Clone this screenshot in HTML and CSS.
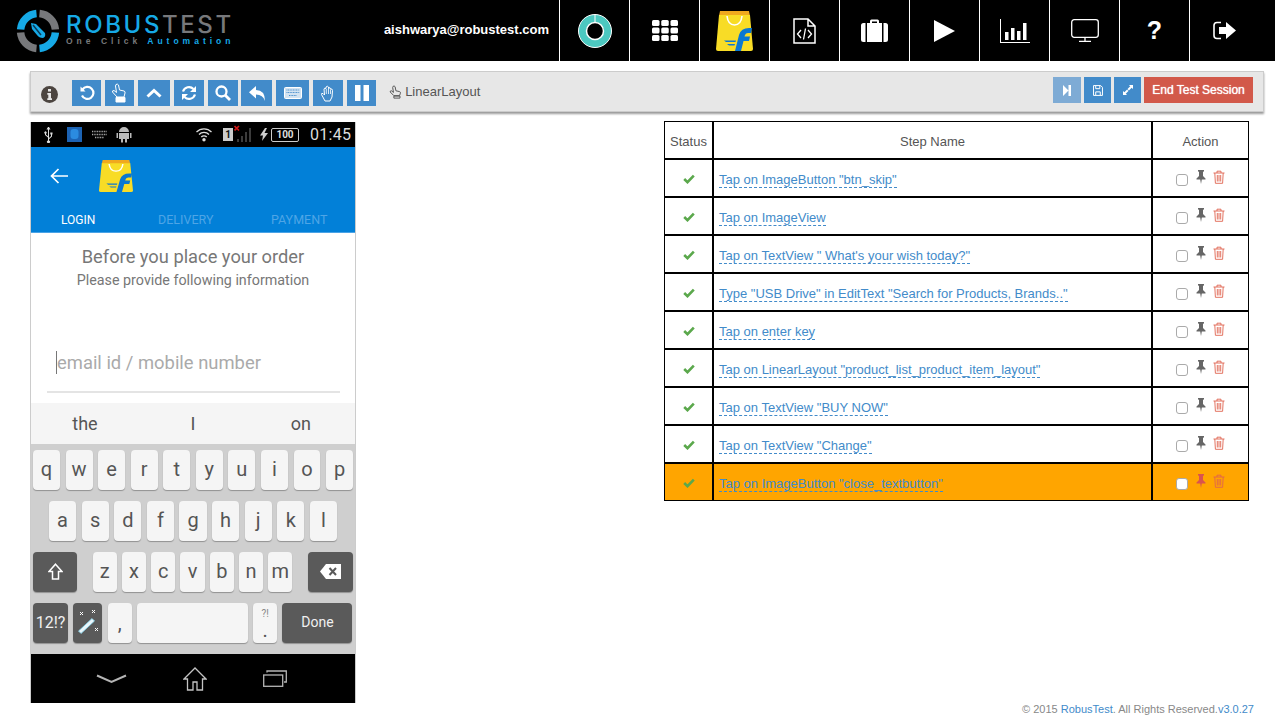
FILE: index.html
```html
<!DOCTYPE html>
<html lang="en">

<head>
    <meta charset="UTF-8">
    <meta name="viewport" content="width=device-width, initial-scale=1.0">
    <title>RobusTest</title>
    <link rel="stylesheet" href="styles.css">
</head>

<body>
    <svg class="sprites" width="0" height="0">
        <symbol id="flipkart" viewBox="0 0 37 40" preserveAspectRatio="none">
            <path d="M4 0H33L34 5H3Z" fill="#f0a91e" />
            <path d="M3 4H34L37 38Q37 40 35 40H2Q0 40 0 38Z" fill="#f8dc26" />
            <path d="M11 5Q12 14 18.500 14Q25 14 26 5" fill="none" stroke="#fff" stroke-width="1.600" />
            <path d="M19 40L23 24Q25 17 33 17H36L35 22H32Q29.600 22 29 24L28.500 25.500H34L33 30H27.500L25 40Z" fill="#0a78d2" />
            <path d="M8 29.500H20L19.500 31H10ZM11 33H19L18.500 34.500H13Z" fill="#0a78d2" />
        </symbol>
        <symbol id="check" viewBox="0 0 12 10">
            <path d="M1.200 5L4.500 8.200L10.800 1.600" fill="none" stroke="currentColor" stroke-width="2.600" />
        </symbol>
        <symbol id="pin" viewBox="0 0 10 14">
            <path d="M2 0H8V1.200L7 2V6L9.500 8.500V9.500H5.800L5 14L4.200 9.500H.5V8.500L3 6V2L2 1.200Z" fill="currentColor" />
        </symbol>
        <symbol id="trash" viewBox="0 0 12 14">
            <path d="M.5 3H11.500M4 3V1.200H8V3M1.800 3L2.400 13.300H9.600L10.200 3M4.300 5V11.500M6 5V11.500M7.700 5V11.500" fill="none" stroke="currentColor" stroke-width=".9" />
        </symbol>
    </svg>

    <header class="topbar">
        <div class="brand">
            <svg class="brand-ring" width="44" height="44" viewBox="0 0 44 44">
                <g fill="none" stroke-width="7.500">
                    <path d="M20.500 4.600A17.500 17.500 0 0 0 4.600 20.500" stroke="#16a9e6" />
                    <path d="M23.500 4.600A17.500 17.500 0 0 1 39.400 20.500" stroke="#77787b" />
                    <path d="M39.400 23.500A17.500 17.500 0 0 1 23.500 39.400" stroke="#16a9e6" />
                    <path d="M20.500 39.400A17.500 17.500 0 0 1 4.600 23.500" stroke="#77787b" />
                </g>
                <path d="M15 14L20 15L29 24Q30 28 27 29Q23 29 21 26L16 20Z" fill="#16a9e6" />
                <path d="M17 16L25 26" stroke="#0b3a55" stroke-width="1.500" />
            </svg>
            <div class="brand-text">
                <div class="brand-name"><span class="blue">ROBUS</span>TEST</div>
                <div class="brand-sub">One Click <span class="blue">Automation</span></div>
            </div>
        </div>
        <div class="user-mail">aishwarya@robustest.com</div>
        <nav class="topnav">
            <a class="nav-cell">
                <svg width="36" height="36" viewBox="0 0 36 36">
                    <circle cx="18" cy="18" r="16.500" fill="#4cc8c0" stroke="#fff" stroke-width="1" />
                    <circle cx="18" cy="18" r="8.500" fill="#000" stroke="#fff" stroke-width="1.500" />
                    <path d="M18 1.500V9" stroke="#fff" stroke-width="1" />
                </svg>
            </a>
            <a class="nav-cell">
                <svg width="26" height="21" viewBox="0 0 26 21" fill="#fff">
                    <rect x="0" y="0" width="7.500" height="6" rx="1.500" />
                    <rect x="9.250" y="0" width="7.500" height="6" rx="1.500" />
                    <rect x="18.500" y="0" width="7.500" height="6" rx="1.500" />
                    <rect x="0" y="7.500" width="7.500" height="6" rx="1.500" />
                    <rect x="9.250" y="7.500" width="7.500" height="6" rx="1.500" />
                    <rect x="18.500" y="7.500" width="7.500" height="6" rx="1.500" />
                    <rect x="0" y="15" width="7.500" height="6" rx="1.500" />
                    <rect x="9.250" y="15" width="7.500" height="6" rx="1.500" />
                    <rect x="18.500" y="15" width="7.500" height="6" rx="1.500" />
                </svg>
            </a>
            <a class="nav-cell">
                <svg width="37" height="40">
                    <use href="#flipkart" />
                </svg>
            </a>
            <a class="nav-cell">
                <svg width="23" height="26" viewBox="0 0 23 26" fill="none" stroke="#fff" stroke-width="1.500">
                    <path d="M1 1H15L22 8V25H1ZM15 1V8H22" />
                    <path d="M8 12L4.500 16L8 20M15 12L18.500 16L15 20M12.500 10.500L10.500 21.500" stroke-width="1.300" />
                </svg>
            </a>
            <a class="nav-cell">
                <svg width="27" height="23" viewBox="0 0 27 23" fill="#fff">
                    <path d="M9 5V2Q9 .5 10.500 .5H16.500Q18 .5 18 2V5H16V2.500H11V5Z" />
                    <path d="M2.500 4H4.500V23H2.500Q0 23 0 20.500V6.500Q0 4 2.500 4ZM6 4H21V23H6ZM22.500 4H24.500Q27 4 27 6.500V20.500Q27 23 24.500 23H22.500Z" />
                </svg>
            </a>
            <a class="nav-cell">
                <svg width="21" height="22" viewBox="0 0 21 22">
                    <path d="M0 0L21 11L0 22Z" fill="#fff" />
                </svg>
            </a>
            <a class="nav-cell">
                <svg width="30" height="24" viewBox="0 0 30 24" fill="#fff">
                    <path d="M0 0H1V23H30V24H0Z" />
                    <rect x="5" y="13" width="3.500" height="8" />
                    <rect x="11" y="9" width="3.500" height="12" />
                    <rect x="17" y="12" width="3.500" height="9" />
                    <rect x="23" y="4" width="3.500" height="17" />
                </svg>
            </a>
            <a class="nav-cell">
                <svg width="28" height="23" viewBox="0 0 28 23" fill="none" stroke="#fff" stroke-width="1.300">
                    <rect x=".7" y=".7" width="26.600" height="17.600" rx="2.500" />
                    <path d="M14 18.500V22M8 22.300H20" />
                </svg>
            </a>
            <a class="nav-cell nav-help">?</a>
            <a class="nav-cell">
                <svg width="23" height="19" viewBox="0 0 23 19">
                    <path d="M8 1.500H4Q1 1.500 1 4.500V14.500Q1 17.500 4 17.500H8" fill="none" stroke="#fff" stroke-width="1.600" />
                    <path d="M6 6H13V1L23 9.500L13 18V13H6Z" fill="#fff" />
                </svg>
            </a>
        </nav>
    </header>

    <div class="toolbar">
        <svg class="info-icon" width="17" height="17" viewBox="0 0 17 17">
            <circle cx="8.500" cy="8.500" r="8.500" fill="#4c4540" />
            <path d="M7 3H10V5.500H7ZM6.300 7H10V12.300H11V14H6.300V12.300H7.300V8.700H6.300Z" fill="#e7e7e7" />
        </svg>
        <div class="tool-group">
            <a class="btn w29">
                <svg width="16" height="16" viewBox="0 0 16 16" fill="none" stroke="#fff" stroke-width="2.200">
                    <path d="M3.500 4.500A6 6 0 1 1 3 10.500" />
                    <path d="M1.500 1.500V6.500H6.500Z" fill="#fff" stroke="none" />
                </svg>
            </a>
            <a class="btn w29">
                <svg width="16" height="20" viewBox="0 0 16 20" fill="none" stroke="#fff" stroke-width="1">
                    <path d="M5 1.500Q6.500 .5 7.500 2L8.500 7L13 8Q14.500 8.500 14 10L13 14H6L1.500 9Q1 7.500 3 7.500L5.500 9.500L4.500 3Z" />
                    <path d="M5 14.500H14V19H5Z" fill="#fff" />
                </svg>
            </a>
            <a class="btn w32">
                <svg width="16" height="10" viewBox="0 0 16 10" fill="none" stroke="#fff" stroke-width="3">
                    <path d="M1.500 8.500L8 2.500L14.500 8.500" />
                </svg>
            </a>
            <a class="btn w30">
                <svg width="16" height="16" viewBox="0 0 16 16" fill="none" stroke="#fff" stroke-width="2.200">
                    <path d="M2 6.500A6.300 6.300 0 0 1 12.500 4M14 9.500A6.300 6.300 0 0 1 3.500 12" />
                    <path d="M15 1V7H9ZM1 15V9H7Z" fill="#fff" stroke="none" />
                </svg>
            </a>
            <a class="btn w30">
                <svg width="16" height="16" viewBox="0 0 16 16" fill="none" stroke="#fff" stroke-width="2.300">
                    <circle cx="6.500" cy="6.500" r="5" />
                    <path d="M10 10L15 15" stroke-width="2.800" />
                </svg>
            </a>
            <a class="btn w31">
                <svg width="16" height="15" viewBox="0 0 16 15">
                    <path d="M7 0V4Q16 4 16 15Q14 8.500 7 8.500V12.500L0 6.200Z" fill="#fff" />
                </svg>
            </a>
            <a class="btn w33">
                <svg width="18" height="12" viewBox="0 0 18 12">
                    <rect x=".5" y=".5" width="17" height="11" rx="1" fill="#d3e3f1" stroke="#fff" />
                    <path d="M2.500 3H15.500M2.500 5.500H15.500M5 8.500H13" stroke="#4a8fcd" stroke-width="1" stroke-dasharray="1 .6" />
                </svg>
            </a>
            <a class="btn w30">
                <svg width="16" height="17" viewBox="0 0 16 17" fill="none" stroke="#fff" stroke-width="1">
                    <path d="M5 16L1.500 9.500Q1 8 3 8.500L4.500 10L4 4Q4.500 2.500 6 3.500V2Q7.500 .5 8.500 2V3Q10.500 2 10.500 4Q12.500 3.500 12.500 5.500L12 12L10 16Z" />
                    <path d="M6.300 4V9M8.500 3V9M10.500 4.500V9" stroke-width=".8" />
                </svg>
            </a>
            <a class="btn w29">
                <svg width="14" height="16" viewBox="0 0 14 16" fill="#fff">
                    <rect x="0" y="0" width="5.500" height="16" />
                    <rect x="8.500" y="0" width="5.500" height="16" />
                </svg>
            </a>
        </div>
        <div class="element-name">
            <svg width="13" height="14" viewBox="0 0 16 17" fill="none" stroke="#555" stroke-width="1.200">
                <path d="M5 1.500Q6.500 .5 7.500 2L8.500 7L13 8Q14.500 8.500 14 10L13 13H6L1.500 8.500Q1 7 3 7L5.500 9L4.500 3Z" />
                <path d="M6 13.500H13.500V16H6Z" />
            </svg>
            LinearLayout
        </div>
        <div class="tool-right">
            <a class="btn w28 btn-faded">
                <svg width="8" height="11" viewBox="0 0 8 11" fill="#fff">
                    <path d="M0 0L5.500 5.500L0 11ZM5.500 0H8V11H5.500Z" />
                </svg>
            </a>
            <a class="btn w27">
                <svg width="10" height="11" viewBox="0 0 11 12" fill="none" stroke="#fff" stroke-width="1.100">
                    <path d="M.6 .6H8.500L10.400 2.500V11.400H.6Z" />
                    <path d="M3 .8V4H7.500V.8M3 11V7.500H8V11" />
                </svg>
            </a>
            <a class="btn w27">
                <svg width="10" height="10" viewBox="0 0 11 11" fill="#fff">
                    <path d="M6.500 0H11V4.500L9.500 3L6.500 6L5 4.500L8 1.500ZM0 6.500L1.500 8L4.500 5L6 6.500L3 9.500L4.500 11H0Z" />
                </svg>
            </a>
            <a class="btn-end">End Test Session</a>
        </div>
    </div>

    <main class="content">
        <section class="phone">
            <div class="status-bar">
                <svg class="st-usb" width="9" height="16" viewBox="0 0 9 16" fill="#ddd">
                    <path d="M4 0H5L6.500 2.500H5V11L7 9V7.500H6.300V5.500H8.500V7.500H8V9.500L5 12.300V13.500A1.500 1.500 0 1 1 4 13.500V10.500L1 8V6.800A1.200 1.200 0 1 1 2 6.800V7.500L4 9.300V2.500H2.500Z" />
                </svg>
                <svg class="st-app" width="15" height="15" viewBox="0 0 15 15">
                    <rect width="15" height="15" fill="#1c63b4" />
                    <rect x="3.500" y="2" width="8" height="10" rx="3" fill="#2b8be0" />
                </svg>
                <svg class="st-kbd" width="15" height="9" viewBox="0 0 15 9" fill="none" stroke="#aaa" stroke-width="1.500" stroke-dasharray="1 .7">
                    <path d="M0 1.500H15M0 4.500H15M3 7.500H12" />
                </svg>
                <svg class="st-droid" width="16" height="17" viewBox="0 0 16 17" fill="#bbb">
                    <path d="M3 6A5 5 0 0 1 13 6ZM3 7H13V13H11V16.500H9V13H7V16.500H5V13H3ZM.5 7H2V12H.5ZM14 7H15.500V12H14Z" />
                </svg>
                <svg class="st-wifi" width="16" height="15" viewBox="0 0 16 15" fill="none" stroke="#ddd" stroke-width="1.300">
                    <path d="M.5 5A10.500 10.500 0 0 1 15.500 5M3 7.500A7 7 0 0 1 13 7.500M5.300 10A3.600 3.600 0 0 1 10.700 10" />
                    <circle cx="8" cy="12.800" r="1.700" fill="#ddd" stroke="none" />
                </svg>
                <div class="st-sim">1</div>
                <svg class="st-signal" width="18" height="18" viewBox="0 0 18 18">
                    <path d="M.5 1L5 5.500M5 1L.5 5.500" stroke="#d01818" stroke-width="1.700" />
                    <path d="M3 14H5V17H3ZM7 11H9V17H7ZM11 7H13V17H11ZM15 3H17V17H15Z" fill="#3c3c3c" />
                </svg>
                <svg class="st-bolt" width="8" height="13" viewBox="0 0 8 13">
                    <path d="M5 0L0 7.500H3L2 13L8 5H4.500L7 0Z" fill="#ccc" />
                </svg>
                <div class="st-battery">100</div>
                <div class="st-time">01:45</div>
            </div>
            <div class="app-head">
                <div class="app-title">
                    <svg class="back-arrow" width="18" height="16" viewBox="0 0 18 16" fill="none" stroke="#fff" stroke-width="1.700">
                        <path d="M18 8H1.500M8.500 1L1.500 8L8.500 15" />
                    </svg>
                    <svg class="app-logo" width="34" height="32">
                        <use href="#flipkart" />
                    </svg>
                </div>
                <div class="tabs">
                    <span class="tab tab-login">LOGIN</span>
                    <span class="tab tab-delivery">DELIVERY</span>
                    <span class="tab">PAYMENT</span>
                </div>
            </div>
            <div class="login-form">
                <div class="login-title">Before you place your order</div>
                <div class="login-sub">Please provide following information</div>
                <div class="login-input"><span class="caret"></span>email id / mobile number</div>
            </div>
            <div class="suggest">
                <span>the</span>
                <span>I</span>
                <span>on</span>
            </div>
            <div class="keyboard">
                <div class="key-row row-one">
                    <span class="key">q</span><span class="key">w</span><span class="key">e</span><span class="key">r</span><span class="key">t</span><span class="key">y</span><span class="key">u</span><span class="key">i</span><span class="key">o</span><span class="key">p</span>
                </div>
                <div class="key-row row-two">
                    <span class="key">a</span><span class="key">s</span><span class="key">d</span><span class="key">f</span><span class="key">g</span><span class="key">h</span><span class="key">j</span><span class="key">k</span><span class="key">l</span>
                </div>
                <div class="key-row row-three">
                    <span class="key key-dark key-shift">
                        <svg width="15" height="17" viewBox="0 0 15 17" fill="none" stroke="#fff" stroke-width="1.500">
                            <path d="M7.500 1.200L14 8.500H10.500V16H4.500V8.500H1Z" />
                        </svg>
                    </span>
                    <div class="letter-group">
                        <span class="key">z</span><span class="key">x</span><span class="key">c</span><span class="key">v</span><span class="key">b</span><span class="key">n</span><span class="key">m</span>
                    </div>
                    <span class="key key-dark key-del">
                        <svg width="21" height="15" viewBox="0 0 21 15">
                            <path d="M6 0H21V15H6L0 7.500Z" fill="#fff" />
                            <path d="M9.500 4L16 11M16 4L9.500 11" stroke="#5a5a5a" stroke-width="2" />
                        </svg>
                    </span>
                </div>
                <div class="key-row row-four">
                    <span class="key key-dark key-num">12!?</span>
                    <span class="key key-dark key-magic">
                        <svg width="22" height="24" viewBox="0 0 22 24">
                            <path d="M1.500 21L15 8.500L17.500 11L4 23.500Z" fill="#eaf6fb" stroke="#7fd0ea" stroke-width=".8" />
                            <path d="M3 2L6 5M6 2L3 5M15 0L18 3M18 0L15 3M18 18L21 21M21 18L18 21" stroke="#fff" stroke-width="1" />
                        </svg>
                    </span>
                    <span class="key key-comma">,</span>
                    <span class="key key-space"></span>
                    <span class="key key-dot"><small>?!</small>.</span>
                    <span class="key key-dark key-done">Done</span>
                </div>
            </div>
            <div class="phone-nav">
                <svg width="31" height="10" viewBox="0 0 31 10" fill="none" stroke="#b5b5b5" stroke-width="2">
                    <path d="M1 1.500L15.500 8L30 1.500" />
                </svg>
                <svg width="24" height="24" viewBox="0 0 24 24" fill="none" stroke="#c4c4c4" stroke-width="1.300">
                    <path d="M1 12L12 1L23 12H19.500V23H14V15H10V23H4.500V12Z" />
                </svg>
                <svg width="24" height="17" viewBox="0 0 24 17" fill="none" stroke="#b5b5b5" stroke-width="1.300">
                    <rect x=".7" y="5" width="19" height="11.300" />
                    <path d="M4 2.500V1H23.300V12H21" />
                </svg>
            </div>
        </section>

        <table class="steps">
            <thead>
                <tr>
                    <th class="col-status">Status</th>
                    <th class="col-step">Step Name</th>
                    <th class="col-action">Action</th>
                </tr>
            </thead>
            <tbody>
                <tr>
                    <td class="cell-status"><svg width="12" height="10"><use href="#check" /></svg></td>
                    <td><a class="step-link">Tap on ImageButton "btn_skip"</a></td>
                    <td><div class="actions"><input type="checkbox"><svg class="ic-pin" width="10" height="14"><use href="#pin" /></svg><svg class="ic-trash" width="12" height="14"><use href="#trash" /></svg></div></td>
                </tr>
                <tr>
                    <td class="cell-status"><svg width="12" height="10"><use href="#check" /></svg></td>
                    <td><a class="step-link">Tap on ImageView</a></td>
                    <td><div class="actions"><input type="checkbox"><svg class="ic-pin" width="10" height="14"><use href="#pin" /></svg><svg class="ic-trash" width="12" height="14"><use href="#trash" /></svg></div></td>
                </tr>
                <tr>
                    <td class="cell-status"><svg width="12" height="10"><use href="#check" /></svg></td>
                    <td><a class="step-link">Tap on TextView " What's your wish today?"</a></td>
                    <td><div class="actions"><input type="checkbox"><svg class="ic-pin" width="10" height="14"><use href="#pin" /></svg><svg class="ic-trash" width="12" height="14"><use href="#trash" /></svg></div></td>
                </tr>
                <tr>
                    <td class="cell-status"><svg width="12" height="10"><use href="#check" /></svg></td>
                    <td><a class="step-link">Type "USB Drive" in EditText "Search for Products, Brands.."</a></td>
                    <td><div class="actions"><input type="checkbox"><svg class="ic-pin" width="10" height="14"><use href="#pin" /></svg><svg class="ic-trash" width="12" height="14"><use href="#trash" /></svg></div></td>
                </tr>
                <tr>
                    <td class="cell-status"><svg width="12" height="10"><use href="#check" /></svg></td>
                    <td><a class="step-link">Tap on enter key</a></td>
                    <td><div class="actions"><input type="checkbox"><svg class="ic-pin" width="10" height="14"><use href="#pin" /></svg><svg class="ic-trash" width="12" height="14"><use href="#trash" /></svg></div></td>
                </tr>
                <tr>
                    <td class="cell-status"><svg width="12" height="10"><use href="#check" /></svg></td>
                    <td><a class="step-link">Tap on LinearLayout "product_list_product_item_layout"</a></td>
                    <td><div class="actions"><input type="checkbox"><svg class="ic-pin" width="10" height="14"><use href="#pin" /></svg><svg class="ic-trash" width="12" height="14"><use href="#trash" /></svg></div></td>
                </tr>
                <tr>
                    <td class="cell-status"><svg width="12" height="10"><use href="#check" /></svg></td>
                    <td><a class="step-link">Tap on TextView "BUY NOW"</a></td>
                    <td><div class="actions"><input type="checkbox"><svg class="ic-pin" width="10" height="14"><use href="#pin" /></svg><svg class="ic-trash" width="12" height="14"><use href="#trash" /></svg></div></td>
                </tr>
                <tr>
                    <td class="cell-status"><svg width="12" height="10"><use href="#check" /></svg></td>
                    <td><a class="step-link">Tap on TextView "Change"</a></td>
                    <td><div class="actions"><input type="checkbox"><svg class="ic-pin" width="10" height="14"><use href="#pin" /></svg><svg class="ic-trash" width="12" height="14"><use href="#trash" /></svg></div></td>
                </tr>
                <tr class="row-current">
                    <td class="cell-status"><svg width="12" height="10"><use href="#check" /></svg></td>
                    <td><a class="step-link">Tap on ImageButton "close_textbutton"</a></td>
                    <td><div class="actions"><input type="checkbox"><svg class="ic-pin" width="10" height="14"><use href="#pin" /></svg><svg class="ic-trash" width="12" height="14"><use href="#trash" /></svg></div></td>
                </tr>
            </tbody>
        </table>
    </main>

    <footer class="footer">
        &copy; 2015 <a>RobusTest</a>. All Rights Reserved.<a>v3.0.27</a>
    </footer>
</body>

</html>
```

FILE: styles.css
```css
* {
    box-sizing: border-box;
}

body {
    margin: 0;
    font-family: "Liberation Sans", Arial, sans-serif;
    font-size: 13px;
    color: #555;
    background-color: #fff;
}

.sprites {
    display: block;
    height: 0;
}

.blue {
    color: #16a9e6;
}

/* top bar */
.topbar {
    display: flex;
    align-items: center;
    height: 61px;
    background-color: #000;
    padding-right: 16px;
}

.brand {
    display: flex;
    align-items: center;
    margin-left: 16px;
}

.brand-ring {
    margin-right: 6px;
}

.brand-text {
    padding-bottom: 2px;
}

.brand-name {
    font-family: Inter, sans-serif;
    font-size: 24px;
    font-weight: 500;
    line-height: 24px;
    letter-spacing: 2.600px;
    color: #77787b;
    white-space: nowrap;
}

.brand-sub {
    font-size: 8.500px;
    font-weight: bold;
    line-height: 9px;
    letter-spacing: 4px;
    color: #77787b;
    white-space: nowrap;
}

.user-mail {
    margin-left: auto;
    padding-right: 10px;
    padding-bottom: 3px;
    color: #fff;
    font-weight: bold;
    font-size: 13px;
}

.topnav {
    display: flex;
    height: 61px;
}

.nav-cell {
    display: flex;
    align-items: center;
    justify-content: center;
    width: 70px;
    border-left: 1px solid #fff;
}

.nav-help {
    color: #fff;
    font-size: 25px;
    font-weight: bold;
}

/* toolbar */
.toolbar {
    display: flex;
    align-items: center;
    height: 41px;
    margin: 10px 11px 0 30px;
    padding: 0 10px;
    background-color: #e7e7e7;
    border: 1px solid #ccc;
    box-shadow: 0 2px 2px rgba(0, 0, 0, 0.4);
}

.info-icon {
    margin-top: 5px;
    margin-right: 14px;
}

.tool-group {
    display: flex;
    gap: 3.900px;
    margin-top: 3px;
}

.tool-right {
    display: flex;
    gap: 3px;
    margin-left: auto;
    margin-top: -3px;
}

.btn {
    display: flex;
    align-items: center;
    justify-content: center;
    height: 26px;
    background-color: #428bca;
}

.btn-faded {
    background-color: #7eabd5;
}

.w27 { width: 27px; }
.w28 { width: 28px; }
.w29 { width: 29px; }
.w30 { width: 30px; }
.w31 { width: 31px; }
.w32 { width: 32px; }
.w33 { width: 33px; }

.btn-end {
    display: flex;
    align-items: center;
    justify-content: center;
    width: 109px;
    height: 26px;
    background-color: #d2594a;
    color: #fff;
    font-size: 12px;
    text-shadow: 0 0 1px #fff;
}

.element-name {
    display: flex;
    align-items: center;
    gap: 3px;
    margin-left: 13px;
    color: #555;
}

/* main area */
.content {
    display: flex;
    align-items: flex-start;
    padding-left: 30px;
}

.phone {
    display: flex;
    flex-direction: column;
    flex: none;
    width: 326px;
    height: 581px;
    margin-top: 10px;
    border-left: 1px solid #ccc;
    border-right: 1px solid #ccc;
    font-family: Roboto, sans-serif;
}

.status-bar {
    display: flex;
    align-items: center;
    flex: none;
    height: 25px;
    background-color: #000;
    color: #ddd;
}

.st-usb { margin-left: 13px; }
.st-app { margin-left: 14px; }
.st-kbd { margin-left: 10px; }
.st-droid { margin-left: 9px; }
.st-wifi { margin-left: 64px; }
.st-signal { margin-left: 1px; margin-bottom: 1px; }
.st-bolt { margin-left: 8px; }

.st-sim {
    width: 10px;
    height: 13px;
    margin-left: 11px;
    background-color: #ccc;
    color: #111;
    font-size: 10px;
    font-weight: bold;
    line-height: 14px;
    text-align: center;
}

.st-battery {
    width: 28px;
    height: 14px;
    margin-left: 3px;
    border: 1px solid #ccc;
    border-radius: 2px;
    color: #ddd;
    font-size: 10px;
    font-weight: bold;
    line-height: 12px;
    text-align: center;
}

.st-time {
    margin-left: 11px;
    font-size: 16px;
    letter-spacing: 0.300px;
}

.app-head {
    flex: none;
    height: 86px;
    background-color: #0280d8;
    border-bottom: 1px solid #4aa3e6;
}

.app-title {
    display: flex;
    align-items: flex-start;
    height: 63px;
}

.back-arrow {
    margin: 21px 0 0 19px;
}

.app-logo {
    margin: 13px 0 0 31px;
}

.tabs {
    display: flex;
    padding-top: 3px;
    padding-left: 30px;
    font-size: 12.500px;
    line-height: 14px;
}

.tab {
    color: #4ea5e6;
}

.tab-login {
    width: 97px;
    color: #fff;
    font-size: 12px;
}

.tab-delivery {
    width: 113px;
}

.login-form {
    flex: none;
    height: 170px;
    background-color: #fff;
    text-align: center;
    padding-top: 13px;
}

.login-title {
    font-size: 18.300px;
    line-height: 22px;
    color: #777;
}

.login-sub {
    margin-top: 1px;
    font-size: 14.300px;
    line-height: 22px;
    color: #777;
}

.login-input {
    display: flex;
    align-items: center;
    height: 52px;
    margin: 50px 15px 0 16px;
    padding-left: 9px;
    padding-bottom: 7px;
    border-bottom: 2px solid #e4e4e4;
    font-size: 18.400px;
    color: #aaa;
}

.caret {
    width: 1px;
    height: 23px;
    background-color: #777;
}

.suggest {
    display: flex;
    flex: none;
    align-items: center;
    height: 41px;
    background-color: #f5f5f5;
    font-size: 18px;
    color: #555;
}

.suggest span {
    width: 33.33%;
    text-align: center;
}

.keyboard {
    display: flex;
    flex-direction: column;
    gap: 11px;
    flex: none;
    height: 210px;
    padding-top: 6px;
    background-color: #cfcfcf;
}

.key-row {
    display: flex;
    height: 40px;
}

.row-one {
    gap: 5.600px;
    padding: 0 2px;
}

.row-two {
    gap: 5.500px;
    padding: 0 18px;
}

.row-three {
    justify-content: space-between;
    padding: 0 2px;
}

.row-four {
    gap: 5.300px;
    padding: 0 2px;
}

.letter-group {
    display: flex;
    gap: 5px;
    width: 200px;
}

.key {
    display: flex;
    flex: 1;
    align-items: center;
    justify-content: center;
    padding-bottom: 2px;
    background-color: #f5f5f5;
    border-radius: 4px;
    box-shadow: 0 1px 1px rgba(0, 0, 0, 0.3);
    font-size: 20px;
    color: #555;
}

.key-dark {
    background-color: #5a5a5a;
    color: #f0f0f0;
}

.key-shift {
    flex: none;
    width: 44px;
}

.key-del {
    flex: none;
    width: 45px;
}

.key-num {
    flex: none;
    width: 35px;
    font-size: 16px;
}

.key-magic {
    flex: none;
    width: 29px;
}

.key-comma {
    flex: none;
    width: 24px;
    align-items: flex-end;
    padding-bottom: 8px;
}

.key-space {
    flex: none;
    width: 111px;
}

.key-dot {
    flex: none;
    flex-direction: column;
    width: 24px;
    line-height: 14px;
}

.key-dot small {
    font-size: 10px;
    color: #888;
    margin-bottom: 2px;
}

.key-done {
    flex: none;
    width: 70px;
    font-size: 14px;
}

.phone-nav {
    display: flex;
    flex: none;
    align-items: center;
    justify-content: center;
    gap: 56px;
    height: 49px;
    padding-right: 3px;
    background-color: #000;
}

/* steps table */
.steps {
    flex: none;
    width: 585px;
    margin-top: 9px;
    margin-left: 308px;
    border-collapse: separate;
    border-spacing: 0;
    table-layout: fixed;
}

.steps th,
.steps td {
    height: 38px;
    padding: 0 0 0 5px;
    border: 1px solid #000;
    font-size: 13px;
    font-weight: normal;
    color: #555;
}

.steps th {
    padding: 3px 0 0 0;
    text-align: center;
}

.col-status {
    width: 49px;
}

.col-action {
    width: 97px;
}

.steps .cell-status {
    padding: 2px 0 0 0;
    text-align: center;
    color: #5ba84c;
    line-height: 10px;
}

.step-link {
    display: inline-block;
    margin-top: 4px;
    color: #428bca;
    border-bottom: 1px dashed #428bca;
}

.actions {
    display: flex;
    align-items: flex-start;
    justify-content: center;
    padding-right: 5px;
}

.actions input {
    appearance: none;
    width: 12px;
    height: 12px;
    margin: 4px 0 0 0;
    background-color: #fff;
    border: 1px solid #aaa;
    border-radius: 3px;
}

.ic-pin {
    margin-left: 8px;
    color: #666;
}

.ic-trash {
    margin-left: 7px;
    color: #e0634f;
}

.row-current td {
    background-color: #ffa500;
}

.row-current .ic-pin {
    color: #d9534f;
}

/* footer */
.footer {
    padding-right: 21px;
    font-size: 11px;
    line-height: 13px;
    text-align: right;
    color: #888;
}

.footer a {
    color: #428bca;
}
```
